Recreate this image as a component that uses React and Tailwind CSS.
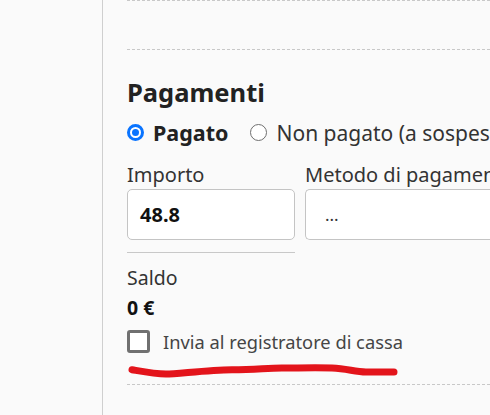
export default function App() {
  return (
    <div className="w-[490px] h-[415px] overflow-hidden bg-[#fafafa] flex" style={{ fontFamily: '"Noto Sans", "Open Sans", sans-serif' }}>
      <div className="w-[103px] shrink-0 border-r border-[#cfcfcf]" />
      <div className="flex-1 pl-[24px] min-w-0 overflow-hidden">
        <div className="h-[49px] border-t border-dashed border-[#c8c8c8]" />
        <div className="border-t border-dashed border-[#c8c8c8]" />
        <h2 className="mt-[26px] text-[25.5px] leading-[32px] font-bold text-[#222] whitespace-nowrap">Pagamenti</h2>
        <div className="mt-[11px] flex items-center whitespace-nowrap h-[28px]">
          <span className="shrink-0 mb-[2px] w-[17px] h-[17px] rounded-full border-[3px] border-[#0a74ff] bg-white flex items-center justify-center">
            <span className="w-[7px] h-[7px] rounded-full bg-[#0a74ff]" />
          </span>
          <span className="shrink-0 ml-[9px] text-[21.5px] leading-[28px] font-bold text-[#222]">Pagato</span>
          <span className="shrink-0 mb-[2px] ml-[22px] w-[17px] h-[17px] rounded-full border-[1.5px] border-[#6f6f6f] bg-white" />
          <span className="shrink-0 ml-[9px] text-[21px] leading-[28px] text-[#333]">Non pagato (a sospeso)</span>
        </div>
        <div className="mt-[16px] flex gap-[10px]">
          <div className="w-[168px] shrink-0">
            <div className="text-[20px] leading-[24px] text-[#333]">Importo</div>
            <div className="mt-[2px] h-[51px] rounded-[5px] border border-[#c4c4c4] bg-white flex items-center pl-[12px] text-[20px] font-bold text-[#111]">48.8</div>
            <div className="mt-[12px] border-t border-[#c8c8c8]" />
          </div>
          <div className="flex-1 min-w-0">
            <div className="text-[20px] leading-[24px] text-[#333] whitespace-nowrap">Metodo di pagamento</div>
            <div className="mt-[2px] h-[51px] rounded-l-[5px] border border-r-0 border-[#c4c4c4] bg-white flex items-center pl-[19px] text-[17px] text-[#333]">...</div>
          </div>
        </div>
        <div className="mt-[13px] text-[19.5px] leading-[24px] text-[#333]">Saldo</div>
        <div className="mt-[6px] text-[19.5px] leading-[24px] font-bold text-[#111]">0 €</div>
        <div className="mt-[10px] flex items-center whitespace-nowrap h-[23px]">
          <span className="shrink-0 w-[23px] h-[23px] rounded-[3px] border-[3px] border-[#707070] bg-white" />
          <span className="ml-[13px] text-[18.3px] leading-[24px] text-[#454545]">Invia al registratore di cassa</span>
        </div>
        <svg width="280" height="20" className="block mt-[7px]" viewBox="0 0 280 20">
          <path d="M5 9.7 C 18 12, 28 14, 39 14 S 80 10, 105 9.7 S 140 8, 155 8 S 190 7.5, 205 8 S 228 12, 239 12 L 267 12" stroke="#e3141b" strokeWidth="7" fill="none" strokeLinecap="round" strokeLinejoin="round" />
        </svg>
        <div className="mt-[4px] border-t border-dashed border-[#c8c8c8]" />
      </div>
    </div>
  );
}
